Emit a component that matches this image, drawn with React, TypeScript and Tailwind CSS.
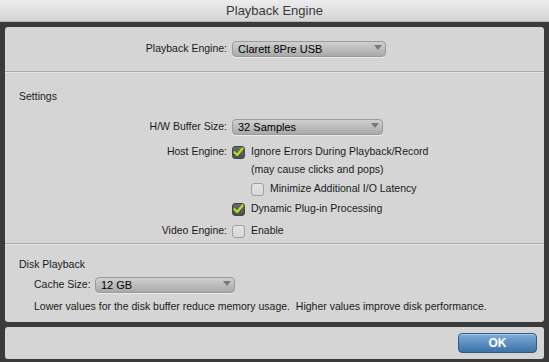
import React from 'react';

const font = { fontFamily: '"Liberation Sans", Arial, sans-serif' };

// 팝업 메뉴 (select 모양)
const Popup = ({ value, width }: { value: string; width: string }) => (
  <div
    className={`relative h-[16px] ${width} rounded-[4px] border border-[#9a9a9a] bg-gradient-to-b from-[#d0d0d0] to-[#a9a9a9] shadow-[0_1px_0_rgba(255,255,255,0.5)] flex items-center pl-[5px] text-[11px] text-black shrink-0`}
  >
    <span className="leading-none">{value}</span>
    <svg className="absolute right-[3px] top-[3px]" width="8" height="5" viewBox="0 0 8 5">
      <path d="M0 0 L8 0 L4 5 Z" fill="#7a7a7a" />
    </svg>
  </div>
);

const Checkbox = ({ checked }: { checked?: boolean }) =>
  checked ? (
    <div className="w-[13px] h-[13px] rounded-[3px] bg-gradient-to-b from-[#6b6b6b] to-[#4e4e4e] border border-[#444] flex items-center justify-center shrink-0">
      <svg width="11" height="10" viewBox="0 0 11 10">
        <path d="M1.5 5.2 L4.2 8 L9.5 1.5" fill="none" stroke="#aee41e" strokeWidth="2.2" strokeLinecap="round" strokeLinejoin="round" />
      </svg>
    </div>
  ) : (
    <div className="w-[13px] h-[13px] rounded-[3px] bg-gradient-to-b from-[#e4e4e4] to-[#d8d8d8] border border-[#9e9e9e] shrink-0" />
  );

const Row = ({ label, children, className = '' }: { label?: string; children: React.ReactNode; className?: string }) => (
  <div className={`flex items-center h-[14px] ${className}`}>
    <div className="w-[227px] text-right pr-[5px] shrink-0">{label}</div>
    <div className="flex items-center gap-[6px]">{children}</div>
  </div>
);

const Separator = () => <div className="h-px bg-[#a9a9a9] border-b border-[#e4e4e4] box-content" />;

export default function App() {
  return (
    <div className="w-[549px] h-[362px] bg-[#3a3a3a] flex flex-col overflow-hidden" style={font}>
      {/* 타이틀 바 */}
      <div className="h-[22px] bg-gradient-to-b from-[#ececec] to-[#d4d4d4] border-b border-[#b5b5b5] flex items-center justify-center text-[13px] text-[#3a3a3a] shrink-0">
        Playback Engine
      </div>

      <div className="px-[5px] pt-[5px] flex flex-col gap-[5px]">
        <div className="h-[295px] bg-[#d5d5d5] rounded-[3px] flex flex-col text-[10.5px] text-[#1a1a1a]">
          {/* Playback Engine */}
          <div className="h-[44px] flex items-center">
            <div className="w-[227px] text-right pr-[5px] shrink-0">Playback Engine:</div>
            <Popup value="Clarett 8Pre USB" width="w-[154px]" />
          </div>

          <Separator />

          {/* Settings */}
          <div className="flex flex-col pt-[16px] pb-[5px]">
            <div className="pl-[14px] h-[14px] leading-[14px]">Settings</div>
            <div className="flex items-center mt-[16px]">
              <div className="w-[227px] text-right pr-[5px] shrink-0">H/W Buffer Size:</div>
              <Popup value="32 Samples" width="w-[151px]" />
            </div>
            <Row label="Host Engine:" className="mt-[10px]">
              <Checkbox checked />
              <span>Ignore Errors During Playback/Record</span>
            </Row>
            <Row className="mt-[4px]">
              <span className="pl-[19px]">(may cause clicks and pops)</span>
            </Row>
            <Row className="mt-[5px]">
              <div className="pl-[19px] flex items-center gap-[6px]">
                <Checkbox />
                <span>Minimize Additional I/O Latency</span>
              </div>
            </Row>
            <Row className="mt-[6px]">
              <Checkbox checked />
              <span>Dynamic Plug-in Processing</span>
            </Row>
            <Row label="Video Engine:" className="mt-[8px]">
              <Checkbox />
              <span>Enable</span>
            </Row>
          </div>

          <Separator />

          {/* Disk Playback */}
          <div className="flex flex-col pt-[12px] pl-[14px]">
            <div className="h-[14px] leading-[14px]">Disk Playback</div>
            <div className="flex items-center mt-[6px] pl-[15px]">
              <span className="w-[61px] shrink-0">Cache Size:</span>
              <Popup value="12 GB" width="w-[140px]" />
            </div>
            <div className="mt-[6px] pl-[15px] h-[14px] leading-[14px] whitespace-nowrap">
              Lower values for the disk buffer reduce memory usage.&nbsp; Higher values improve disk performance.
            </div>
          </div>
        </div>

        {/* 하단 버튼 영역 */}
        <div className="h-[32px] bg-[#d5d5d5] rounded-[3px] flex items-center justify-end pr-[7px]">
          <button className="w-[79px] h-[20px] rounded-[4px] border border-[#2f5c86] bg-gradient-to-b from-[#7eaed6] to-[#3c72a8] text-white text-[12px] font-bold leading-none shadow-[inset_0_1px_0_rgba(255,255,255,0.35)]">
            OK
          </button>
        </div>
      </div>
    </div>
  );
}
